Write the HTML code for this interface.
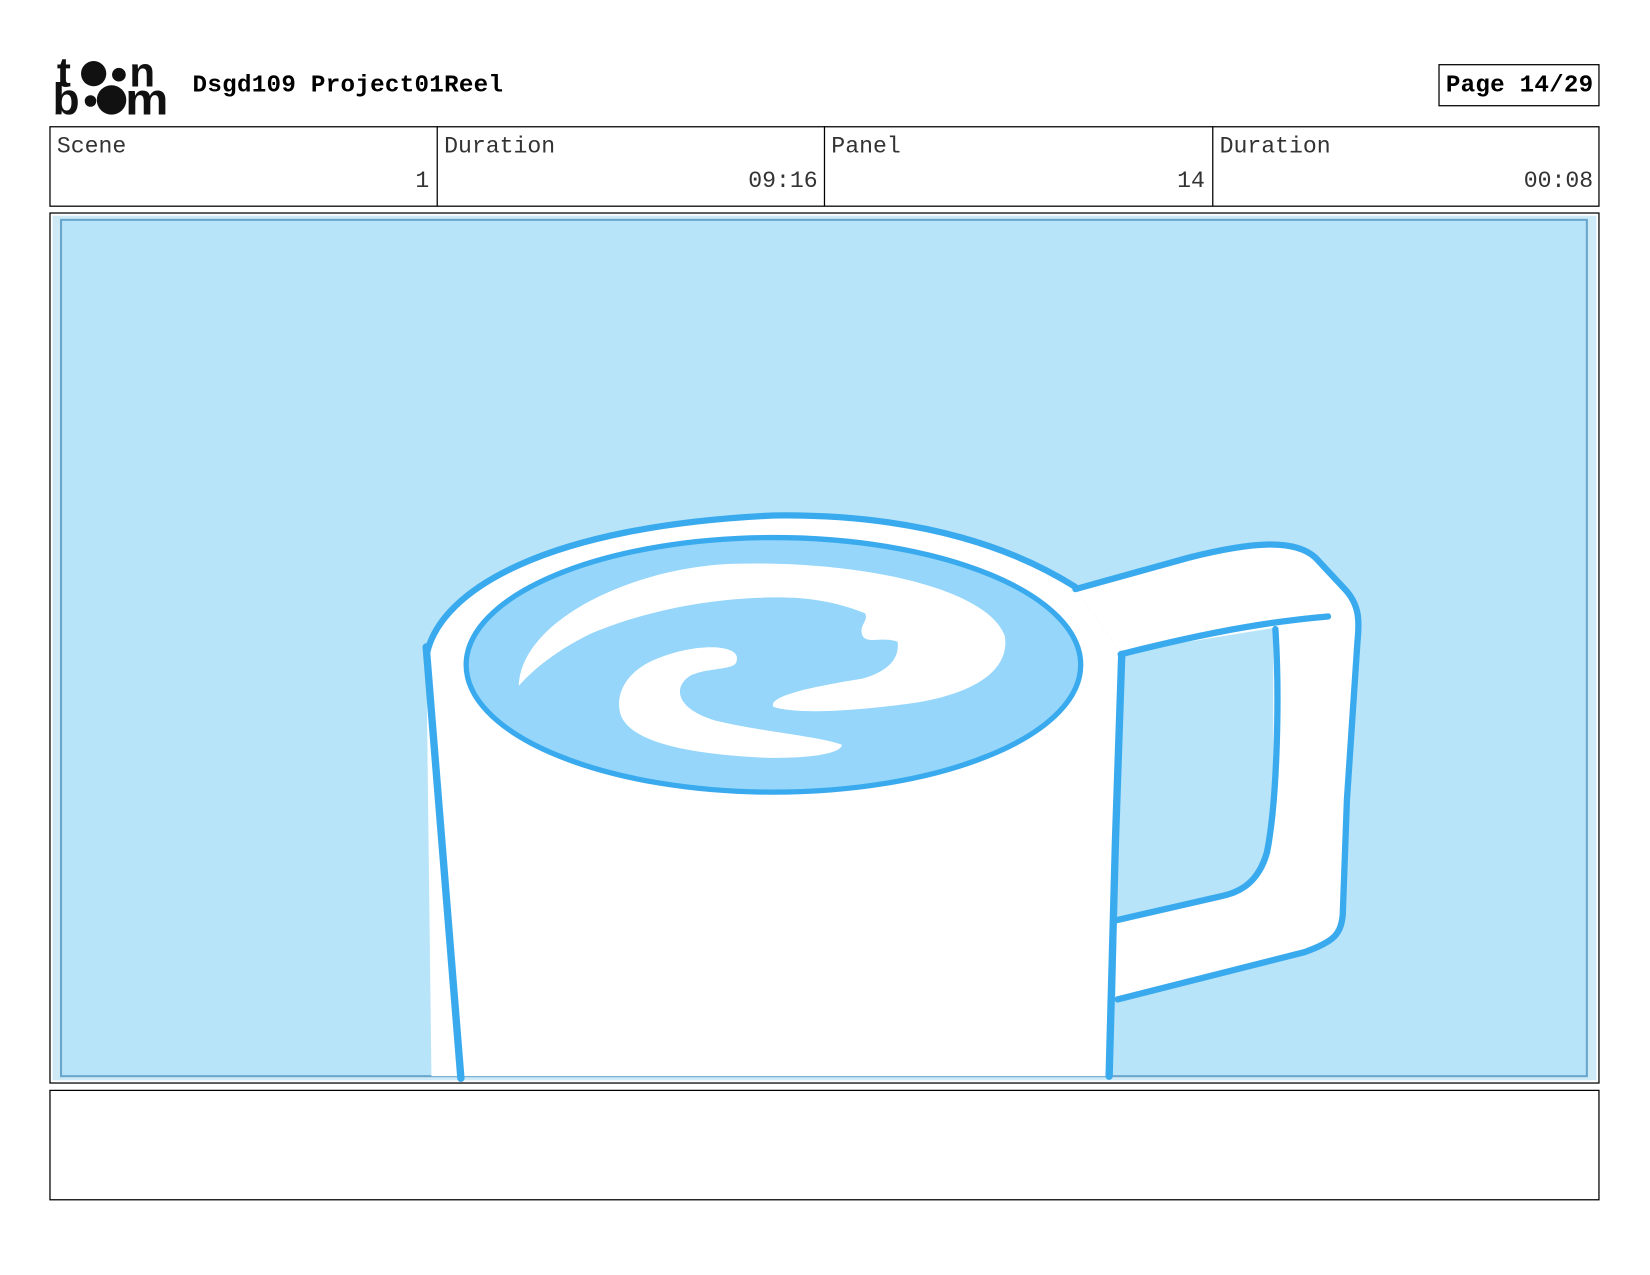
<!DOCTYPE html>
<html><head><meta charset="utf-8"><style>
html,body{margin:0;padding:0;background:#fff;}
svg{display:block;}
</style></head><body>
<svg width="1650" height="1275" viewBox="0 0 1568 1212" preserveAspectRatio="none" xmlns="http://www.w3.org/2000/svg">
<rect width="1568" height="1212" fill="#fff"/>
<!-- logo -->
<g fill="#111" font-family="Liberation Sans, sans-serif" font-weight="bold">
<text x="54" y="82" font-size="40">t</text>
<circle cx="89" cy="70" r="12"/>
<circle cx="113" cy="71" r="6.5"/>
<text x="123" y="82" font-size="40">n</text>
<text x="50" y="109" font-size="42">b</text>
<circle cx="86" cy="96" r="5.5"/>
<circle cx="106" cy="95" r="14"/>
<text x="119" y="109" font-size="42" textLength="41" lengthAdjust="spacingAndGlyphs">m</text>
</g>
<text x="183" y="87" font-family="Liberation Mono, monospace" font-weight="bold" font-size="23" fill="#000" textLength="295" lengthAdjust="spacing">Dsgd109 Project01Reel</text>
<rect x="1367.5" y="61.5" width="152" height="39" fill="none" stroke="#000" stroke-width="1.2"/>
<text x="1374" y="87" font-family="Liberation Mono, monospace" font-weight="bold" font-size="23" fill="#000" textLength="140" lengthAdjust="spacing">Page 14/29</text>
<!-- table -->
<rect x="47.5" y="120.5" width="1472" height="75.5" fill="none" stroke="#000" stroke-width="1.2"/>
<line x1="415.5" y1="120" x2="415.5" y2="196" stroke="#000" stroke-width="1.2"/>
<line x1="783.5" y1="120" x2="783.5" y2="196" stroke="#000" stroke-width="1.2"/>
<line x1="1152.5" y1="120" x2="1152.5" y2="196" stroke="#000" stroke-width="1.2"/>
<g font-family="Liberation Mono, monospace" font-size="22" fill="#333">
<text x="54" y="145">Scene</text>
<text x="422" y="145">Duration</text>
<text x="790" y="145">Panel</text>
<text x="1159" y="145">Duration</text>
<text x="408" y="178" text-anchor="end">1</text>
<text x="777" y="178" text-anchor="end">09:16</text>
<text x="1145" y="178" text-anchor="end">14</text>
<text x="1514" y="178" text-anchor="end">00:08</text>
</g>
<!-- panel -->
<rect x="47.5" y="202.5" width="1472" height="827" fill="#fff" stroke="#000" stroke-width="1.2"/>
<rect x="50" y="205" width="1467" height="822" fill="#cfeaf7"/>
<rect x="58" y="209" width="1450" height="814" fill="#b8e4fa" stroke="#6aa6cc" stroke-width="2"/>
<!-- mug body -->
<path d="M405 615 C420 560 520 500 735 490 C880 490 970 525 1022 560 L1065 620 L1053 1023 L410 1023 Z" fill="#fff"/>
<!-- handle -->
<path d="M1022 560 L1130 530 C1190 515 1230 510 1250 530 L1280 560 C1292 575 1292 590 1290 610 L1278 860 C1276 885 1270 895 1240 905 L1060 950 L1065 620 Z" fill="#fff"/>
<path d="M1067 620 L1210 597 L1210 780 C1210 820 1200 840 1170 850 L1060 875 Z" fill="#b8e4fa"/>
<g fill="none" stroke="#3aaaee" stroke-linecap="round" stroke-linejoin="round">
<path d="M1022 560 L1130 530 C1190 515 1230 512 1250 530 L1278 560 C1292 575 1292 590 1290 610 L1280 760 L1276 870 C1274 888 1268 895 1240 905 L1062 950" stroke-width="6"/>
<path d="M1065 622 C1120 608 1190 592 1262 586" stroke-width="6"/>
<path d="M1212 598 C1216 660 1214 760 1204 810 C1196 838 1180 848 1160 852 L1060 875" stroke-width="6"/>
<path d="M1066 622 L1060 800 L1054 1023" stroke-width="7"/>
<path d="M405 615 L438 1025" stroke-width="7"/>
<path d="M406 620 C420 560 520 500 735 490 C880 488 970 525 1022 558" stroke-width="6"/>
</g>
<!-- liquid -->
<ellipse cx="735" cy="632" rx="292" ry="121" fill="#95d6fa" stroke="#3aaaee" stroke-width="5"/>
<path d="M493 652 C495 590 600 540 694 536 C820 532 940 560 955 605 C960 640 920 660 870 668 C820 675 760 680 735 672 C728 660 790 650 820 645 C845 638 855 625 853 610 C840 605 825 612 820 605 C815 595 826 590 822 583 C790 570 760 567 728 568 C650 570 590 590 560 603 C530 618 508 635 493 652Z" fill="#fff"/>
<path d="M700 628 C705 612 660 610 620 628 C590 642 585 665 590 680 C600 705 650 716 720 720 C770 722 800 716 800 708 C780 700 720 695 680 685 C645 675 638 655 655 643 C670 634 700 638 700 628 Z" fill="#fff"/>
<!-- caption -->
<rect x="47.5" y="1036.5" width="1472" height="104" fill="none" stroke="#000" stroke-width="1.2"/>
</svg>
</body></html>
